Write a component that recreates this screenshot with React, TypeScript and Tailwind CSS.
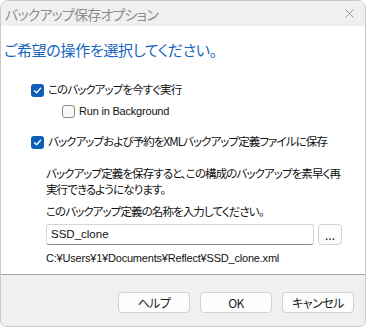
import { X } from 'lucide-react';

function Check({ checked }: { checked: boolean }) {
  if (checked) {
    return (
      <span className="flex w-[13px] h-[13px] shrink-0 items-center justify-center rounded-[3px] bg-[#0f5fb8]">
        <svg width="9" height="9" viewBox="0 0 9 9" fill="none">
          <path d="M1.5 4.8 L3.6 6.8 L7.6 2.2" stroke="white" strokeWidth="1.3" strokeLinecap="round" strokeLinejoin="round" />
        </svg>
      </span>
    );
  }
  return <span className="block w-[13px] h-[13px] shrink-0 rounded-[3px] border border-[#8a8a8a] bg-[#f7f7f7]" />;
}

function Btn({ label }: { label: string }) {
  return (
    <button className="w-[72px] h-[21px] rounded-[4px] border border-[#d2d2d2] bg-[#fdfdfd] text-[12px] tracking-[-0.5px] leading-none text-[#1a1a1a] flex items-center justify-center">
      {label}
    </button>
  );
}

export default function App() {
  return (
    <div className="w-[368px] h-[328px] bg-white font-['Noto_Sans_CJK_JP','Noto_Sans',sans-serif] [font-feature-settings:'palt']">
      <div className="w-[366px] h-[327px] rounded-t-[8px] rounded-b-[6px] border border-[#c9c9c9] overflow-hidden flex flex-col bg-white">
        {/* Title bar */}
        <div className="h-[25px] shrink-0 bg-[#f0f0f0] flex items-center justify-between pl-[4px] pr-[8px]">
          <span className="text-[14px] tracking-[-0.8px] text-[#8c8c8c] leading-none">バックアップ保存オプション</span>
          <X className="w-[15px] h-[15px] text-[#7a7a7a]" strokeWidth={1.2} />
        </div>

        {/* Body */}
        <div className="flex-1 flex flex-col pt-[14px]">
          <div className="pl-[3px] text-[15px] tracking-[-0.3px] leading-[20px] text-[#1565c0]">ご希望の操作を選択してください。</div>

          <div className="mt-[22px] pl-[30px] flex flex-col text-[11.5px] tracking-[-0.9px] text-[#111]">
            <label className="flex items-center gap-[4px] h-[16px]">
              <Check checked />
              <span>このバックアップを今すぐ実行</span>
            </label>
            <label className="mt-[5px] ml-[31px] flex items-center gap-[4px] h-[16px]">
              <Check checked={false} />
              <span className="font-['Liberation_Sans',sans-serif] text-[11px] tracking-[-0.2px]">Run in Background</span>
            </label>
            <label className="mt-[15px] flex items-center gap-[4px] h-[16px] whitespace-nowrap">
              <Check checked />
              <span>バックアップおよび予約をXMLバックアップ定義ファイルに保存</span>
            </label>
          </div>

          <div className="mt-[15px] pl-[45px] pr-[10px] text-[11.5px] tracking-[-0.9px] text-[#111]">
            <p className="leading-[16px] whitespace-nowrap">
              バックアップ定義を保存すると、この構成のバックアップを素早く再
              <br />
              実行できるようになります。
            </p>
            <p className="mt-[6px] leading-[16px] whitespace-nowrap">このバックアップ定義の名称を入力してください。</p>
            <div className="mt-[5px] flex items-center gap-[4px] tracking-normal">
              <div className="w-[268px] h-[21px] rounded-[3px] border border-[#d6d6d6] border-b-[#8a8a8a] flex items-center pl-[4px]">
                <span className="font-['Liberation_Sans',sans-serif] text-[11.5px]">SSD_clone</span>
              </div>
              <div className="w-[24px] h-[21px] rounded-[4px] border border-[#d2d2d2] bg-[#fdfdfd] flex items-center justify-center text-[12px] leading-none text-[#222]">
                ...
              </div>
            </div>
            <p className="mt-[6px] text-[11px] tracking-[-0.2px] leading-[15px] font-['Liberation_Sans',sans-serif]">
              C:¥Users¥1¥Documents¥Reflect¥SSD_clone.xml
            </p>
          </div>
        </div>

        {/* Footer */}
        <div className="h-[52px] shrink-0 border-t border-[#a5a5a5] bg-[#f0f0f0] flex items-start justify-end gap-[10px] pt-[17px] pr-[11px]">
          <Btn label="ヘルプ" />
          <Btn label="OK" />
          <Btn label="キャンセル" />
        </div>
      </div>
    </div>
  );
}
